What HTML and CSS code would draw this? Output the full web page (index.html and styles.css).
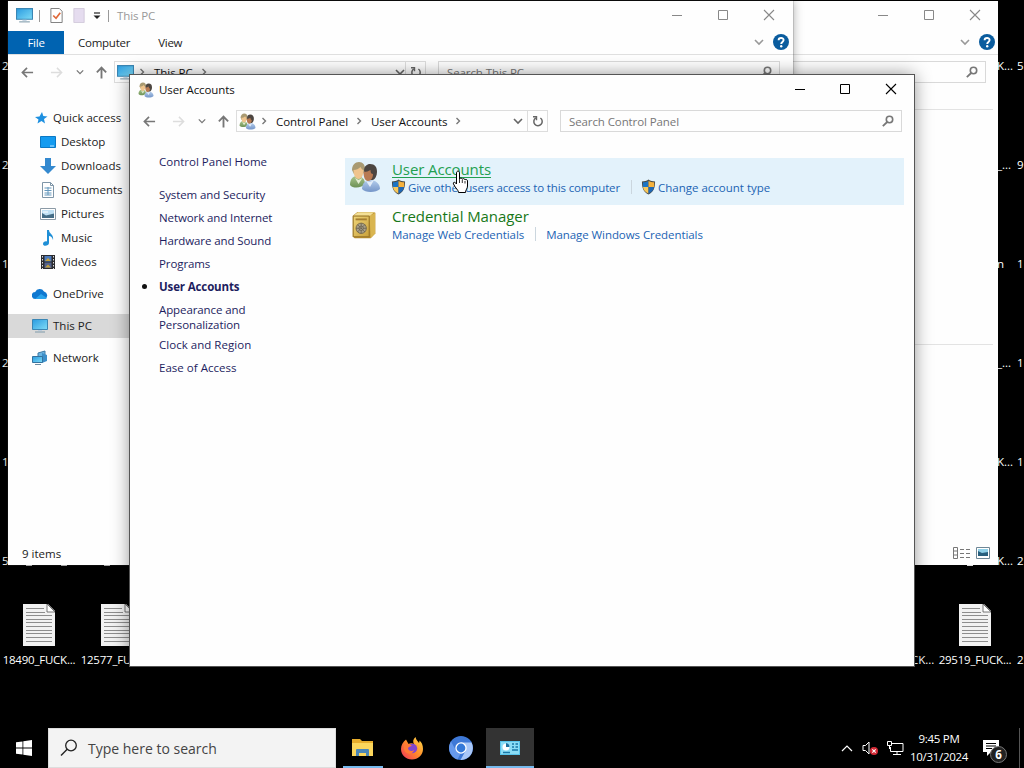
FILE: index.html
```html
<!DOCTYPE html>
<html lang="en">
<head>
    <meta charset="utf-8">
    <title>User Accounts</title>
    <link rel="stylesheet" href="styles.css">
</head>
<body>
<!-- shared icons -->
<svg class="defs" width="0" height="0">
    <defs>
        <linearGradient id="gScreen" x1="0" y1="0" x2="1" y2="1"><stop offset="0" stop-color="#2a9be0"/><stop offset="1" stop-color="#7fdcf7"/></linearGradient>
        <linearGradient id="gSafe" x1="0" y1="0" x2="1" y2="1"><stop offset="0" stop-color="#f0d67a"/><stop offset="1" stop-color="#c9a03a"/></linearGradient>
        <linearGradient id="gFox" x1="1" y1="0" x2="0" y2="1"><stop offset="0" stop-color="#ffe04a"/><stop offset=".5" stop-color="#ff8a2a"/><stop offset="1" stop-color="#f0305e"/></linearGradient>
        <linearGradient id="gGreen" x1="0" y1="0" x2="0" y2="1"><stop offset="0" stop-color="#a9c58c"/><stop offset="1" stop-color="#6d9155"/></linearGradient>
        <linearGradient id="gBlue" x1="0" y1="0" x2="0" y2="1"><stop offset="0" stop-color="#b4cdec"/><stop offset="1" stop-color="#7495c8"/></linearGradient>
    </defs>
    <symbol id="back" viewBox="0 0 14 14"><path d="M13 7H1.5M6.5 2L1.5 7l5 5" fill="none" stroke="currentColor" stroke-width="1.8"/></symbol>
    <symbol id="forward" viewBox="0 0 14 14"><path d="M1 7h11.500M7.500 2l5 5-5 5" fill="none" stroke="currentColor" stroke-width="1.6"/></symbol>
    <symbol id="up" viewBox="0 0 14 14"><path d="M7 13.500V1.800M2 6.800l5-5 5 5" fill="none" stroke="currentColor" stroke-width="2"/></symbol>
    <symbol id="down" viewBox="0 0 10 10"><path d="M1 3l4 4 4-4" fill="none" stroke="currentColor" stroke-width="1.600"/></symbol>
    <symbol id="right" viewBox="0 0 10 10"><path d="M3.500 2l3 3-3 3" fill="none" stroke="currentColor" stroke-width="1.400"/></symbol>
    <symbol id="refresh" viewBox="0 0 12 12"><path d="M8.400 3A4.200 4.200 0 1 1 3.800 2.900" fill="none" stroke="#666" stroke-width="1.500"/><path d="M1 1.700h3.500v3.600" fill="none" stroke="#666" stroke-width="1.400"/></symbol>
    <symbol id="lens" viewBox="0 0 12 12"><circle cx="7.500" cy="4.500" r="3.200" fill="none" stroke="#777" stroke-width="1.600"/><path d="M5.200 7L.8 11.200" stroke="#777" stroke-width="1.800"/></symbol>
    <symbol id="min" viewBox="0 0 12 12"><path d="M1 6.500h10" stroke="currentColor"/></symbol>
    <symbol id="max" viewBox="0 0 12 12"><path d="M1.500 1.500h9v9h-9z" fill="none" stroke="currentColor"/></symbol>
    <symbol id="close" viewBox="0 0 12 12"><path d="M1 1l10 10M11 1L1 11" stroke="currentColor" stroke-width="1.100"/></symbol>
    <symbol id="help" viewBox="0 0 16 16"><circle cx="8" cy="8" r="8" fill="#0a5c9e"/><path d="M5.600 6.300c0-3 5-3 5-.2 0 1.800-2.400 1.800-2.400 3.800" fill="none" stroke="#fff" stroke-width="1.900"/><circle cx="8.200" cy="12.300" r="1.200" fill="#fff"/></symbol>
    <symbol id="pc" viewBox="0 0 16 16"><path d="M.5 1.500h15v10H.5z" fill="url(#gScreen)" stroke="#3a86b4"/><path d="M6 12h4v1H6z" fill="#bcd"/><path d="M3 13.500h10v1H3z" fill="#7e9aaa"/></symbol>
    <symbol id="users" viewBox="0 0 32 32">
        <path d="M1 24c0-6 3-9 7-9 5 0 8 3 8 8-3 4-12 5-15 1z" fill="url(#gGreen)"/>
        <path d="M3 9c0-5 3-8 7-8s6 3 6 7l-2 5H5z" fill="#a99a72"/>
        <path d="M4.500 9c3 0 5-1 7-3 1 2 2 3 3 3 0 5-2 9-5 9s-5-4-5-9z" fill="#efc48d"/>
        <path d="M6 17l3.500 6 4-6-4 2z" fill="#e4edd2"/>
        <path d="M13 28c0-6 4-9 8-9 6 0 10 4 10 9-4 4-15 4-18 0z" fill="url(#gBlue)"/>
        <path d="M15 10c0-5 3-7 6-7 5 0 7 3 7 8 0 4-2 7-4 8h-6z" fill="#4d4641"/>
        <path d="M14.500 11c3 0 5-1 7-2 0 3 1 4 2.500 4 0 4-2 7-5 7s-4.500-4-4.500-9z" fill="#b87a52"/>
        <path d="M17 20l4 6 4-7-4 2z" fill="#e2ecf8"/>
    </symbol>
    <symbol id="shield" viewBox="0 0 16 16"><path d="M8 0c2 1.500 4.500 2 7 2 0 7-1.500 11-7 14C2.500 13 1 9 1 2c2.500 0 5-.5 7-2z" fill="#4b4a45"/><path d="M8 1.500V8H2.100C1.900 6.200 1.900 4.600 2 3c2.300 0 4.200-.6 6-1.500z" fill="#1c74c4"/><path d="M8 1.500V8h5.900c.2-1.800.2-3.400.1-5-2.300 0-4.200-.6-6-1.500z" fill="#f7b23c"/><path d="M8 8H2.100c.4 3 2 5.300 5.900 7z" fill="#f9c85a"/><path d="M8 8h5.900c-.4 3-2 5.300-5.900 7z" fill="#2068b4"/></symbol>
    <symbol id="file" viewBox="0 0 32 42"><path d="M0 0h25l7 7v35H0z" fill="#f2f2f2"/><path d="M24 0v8h8z" fill="#fff" stroke="#555" stroke-width=".8"/><path d="M3 4.500h18M3 8.500h19M3 11.500h26M3 15.500h26M3 18.500h26M3 22.500h26M3 26.500h26M3 29.500h26M3 33.500h26M3 37.500h26" stroke="#8d8d8d"/></symbol>
    <symbol id="picture" viewBox="0 0 16 16"><path d="M.5 2.500h15v11H.5z" fill="#fff" stroke="#8b9aa6"/><path d="M2 4h12v8H2z" fill="#bfe0f4"/><path d="M2 12V7l4 2.500 8-2V12z" fill="#456d86"/><path d="M3 6h5" stroke="#fff"/></symbol>
</svg>

<div class="desktop">
    <!-- file labels peeking out around the windows -->
    <span class="label l1">2</span><span class="label l2">2</span><span class="label l3">1</span>
    <span class="label l4">2</span><span class="label l5">1</span><span class="label l6">5</span>
    <i class="under u1"></i><i class="under u2"></i><i class="under u3"></i><i class="under u4"></i>
    <span class="label r1">K...</span><span class="label n1">5</span>
    <span class="label r2">_...</span><span class="label n2">9</span>
    <span class="label r3">n</span><span class="label n3">1</span>
    <span class="label r4">_...</span><span class="label n4">1</span>
    <span class="label r5">K...</span><span class="label n5">1</span>
    <span class="label r6">K...</span><span class="label n6">2</span>
    <span class="label r7">CK...</span><span class="label n7">2</span>
    <div class="file f1"><svg><use href="#file"/></svg><span>18490_FUCK...</span></div>
    <div class="file f2"><svg><use href="#file"/></svg><span>12577_FUCK...</span></div>
    <div class="file f3"><svg><use href="#file"/></svg><span>29519_FUCK...</span></div>

    <!-- rear explorer window -->
    <div class="window explorer rear">
        <div class="titlebar">
            <div class="controls"><svg><use href="#min"/></svg><svg><use href="#max"/></svg><svg><use href="#close"/></svg></div>
        </div>
        <div class="tabs">
            <svg class="expand"><use href="#down"/></svg>
            <svg class="help"><use href="#help"/></svg>
        </div>
        <div class="navbar">
            <div class="search"><svg><use href="#lens"/></svg></div>
        </div>
        <div class="pane"><hr class="rule"><hr class="rule"></div>
        <div class="status">
            <svg class="view" viewBox="0 0 17 12"><path d="M.5.5h4v11h-4zM.5 4h4M.5 8h4" fill="none" stroke="#777"/><path d="M7 2.500h4M13 2.500h4M7 6.500h4M13 6.500h4M7 10.500h4M13 10.500h4" stroke="#777"/></svg>
            <svg class="view big" viewBox="0 0 14 12"><path d="M.5.500h13v11H.5z" fill="#fff" stroke="#6f8796"/><path d="M2 2h10v7H2z" fill="#8fd0e8"/><path d="M2 9V4l4 2 6-1v4z" fill="#285f7d"/></svg>
        </div>
    </div>

    <!-- This PC window -->
    <div class="window explorer front">
        <div class="titlebar">
            <svg class="app"><use href="#pc"/></svg><i class="bar"></i>
            <svg class="props" viewBox="0 0 13 16"><path d="M.5.500h9l3 3v12H.5z" fill="#fff" stroke="#777"/><path d="M3 8l3 3 4.500-6" fill="none" stroke="#e0693a" stroke-width="1.800"/></svg>
            <svg class="newdir" viewBox="0 0 12 16"><path d="M.5.500h11v15H.5z" fill="#e5dcef" stroke="#d2cadb"/></svg>
            <svg class="custom" viewBox="0 0 8 8"><path d="M1 1h6" stroke="#222" stroke-width="1.200"/><path d="M.5 3.500h7L4 7z" fill="#222"/></svg>
            <i class="bar"></i>
            <span class="caption">This PC</span>
            <div class="controls"><svg><use href="#min"/></svg><svg><use href="#max"/></svg><svg><use href="#close"/></svg></div>
        </div>
        <div class="tabs">
            <span class="tab active">File</span><span class="tab computer">Computer</span><span class="tab">View</span>
            <svg class="expand"><use href="#down"/></svg>
            <svg class="help"><use href="#help"/></svg>
        </div>
        <div class="navbar">
            <div class="arrows">
                <svg><use href="#back"/></svg><svg class="off"><use href="#forward"/></svg><svg class="small"><use href="#down"/></svg><svg><use href="#up"/></svg>
            </div>
            <div class="address">
                <svg class="place"><use href="#pc"/></svg>
                <svg class="chev"><use href="#right"/></svg><span class="crumb">This PC</span><svg class="chev"><use href="#right"/></svg>
                <svg class="drop"><use href="#down"/></svg>
                <div class="reload"><svg><use href="#refresh"/></svg></div>
            </div>
            <div class="search"><span>Search This PC</span><svg><use href="#lens"/></svg></div>
        </div>
        <div class="tree">
            <div class="node"><svg viewBox="0 0 16 16"><path d="M9 2l1.300 4 4.200.5-3.500 2.500 1 4.500L8.500 11l-4 2.500 1-4L2 7l4.500-.5z" fill="#1e90e0"/></svg><span>Quick access</span></div>
            <div class="node sub"><svg viewBox="0 0 16 16"><path d="M.5 2.500h15v11H.5z" fill="#149bf0" stroke="#0b78c4"/><path d="M10 12h4" stroke="#bfe6ff"/></svg><span>Desktop</span></div>
            <div class="node sub"><svg viewBox="0 0 16 16"><path d="M5 0h6v8h5l-8 8-8-8h5z" fill="#3489cf"/></svg><span>Downloads</span></div>
            <div class="node sub"><svg viewBox="0 0 16 16"><path d="M2.500.5h8l3 3v12h-11z" fill="#fff" stroke="#7f96a8"/><path d="M10.500.5v3h3" fill="none" stroke="#7f96a8"/><path d="M4.500 6h7M4.500 8.500h7M4.500 11h7M4.500 13h7M8 5v8" stroke="#6598bd"/></svg><span>Documents</span></div>
            <div class="node sub"><svg><use href="#picture"/></svg><span>Pictures</span></div>
            <div class="node sub"><svg viewBox="0 0 16 16"><path d="M7 0h2c0 4 5 4 4 10-1-3-2-4-4-4v7c0 3-6 4-6 1 0-2 2-3 4-2.500z" fill="#1f8fd6"/></svg><span>Music</span></div>
            <div class="node sub"><svg viewBox="0 0 16 16"><path d="M1 1h14v14H1z" fill="#2b2b2e"/><path d="M4.500 2h7v5.500h-7z" fill="#4d7bbd"/><path d="M4.500 8.500h7V14h-7z" fill="#55648e"/><path d="M5 7l3-3 3 3M5 13.500l3-3 3 3" fill="#c5a23e"/><path d="M2.500 2v13M13.500 2v13" stroke="#ddd" stroke-dasharray="1.500 1.500"/></svg><span>Videos</span></div>
            <div class="node top"><svg viewBox="0 0 16 16"><path d="M3.500 13a3.500 3.500 0 0 1-.3-7A5 5 0 0 1 12 5.500a4 4 0 0 1 1 7.500z" fill="#0f78d0"/><path d="M3 13l6-5 6 4q-1 1-2 1z" fill="#2aa4ec"/></svg><span>OneDrive</span></div>
            <div class="node top selected"><svg><use href="#pc"/></svg><span>This PC</span></div>
            <div class="node top"><svg viewBox="0 0 16 16"><path d="M6 3l7-2v9l-7 1z" fill="#69b4e2" stroke="#3f7aa6"/><path d="M10 3l5 2v6l-5 2z" fill="#3d8fc9"/><path d="M.5 6.500h10v6H.5z" fill="url(#gScreen)" stroke="#34739f"/><path d="M3 14.500h6" stroke="#6c8ba0"/></svg><span>Network</span></div>
        </div>
        <div class="status"><span>9 items</span></div>
    </div>

    <!-- Control Panel window -->
    <div class="window cpanel">
        <div class="titlebar">
            <svg class="app"><use href="#users"/></svg>
            <span class="caption">User Accounts</span>
            <div class="controls"><svg><use href="#min"/></svg><svg><use href="#max"/></svg><svg><use href="#close"/></svg></div>
        </div>
        <div class="navbar">
            <div class="arrows">
                <svg><use href="#back"/></svg><svg class="off"><use href="#forward"/></svg><svg class="small"><use href="#down"/></svg><svg><use href="#up"/></svg>
            </div>
            <div class="address">
                <svg class="place"><use href="#users"/></svg>
                <svg class="chev"><use href="#right"/></svg><span class="crumb">Control Panel</span><svg class="chev"><use href="#right"/></svg><span class="crumb">User Accounts</span><svg class="chev"><use href="#right"/></svg>
                <svg class="drop"><use href="#down"/></svg>
                <div class="reload"><svg><use href="#refresh"/></svg></div>
            </div>
            <div class="search"><span>Search Control Panel</span><svg><use href="#lens"/></svg></div>
        </div>
        <div class="body">
            <ul class="menu">
                <li class="home">Control Panel Home</li>
                <li>System and Security</li>
                <li>Network and Internet</li>
                <li>Hardware and Sound</li>
                <li>Programs</li>
                <li class="here">User Accounts</li>
                <li class="two">Appearance and<br>Personalization</li>
                <li class="wide">Clock and Region</li>
                <li class="wide">Ease of Access</li>
            </ul>
            <div class="content">
                <div class="category hover">
                    <svg class="cat"><use href="#users"/></svg>
                    <div>
                        <div class="heading">User Accounts</div>
                        <div class="links"><svg><use href="#shield"/></svg><span class="give">Give other users access to this computer</span><i></i><svg><use href="#shield"/></svg><span>Change account type</span></div>
                    </div>
                </div>
                <div class="category">
                    <svg class="cat" viewBox="0 0 32 32"><path d="M4 6l5-4h17l2 1v22l-5 5H6l-2-2z" fill="#b58a2c"/><path d="M22 6l6-3v22l-5 5z" fill="#d9b550"/><path d="M4.500 6l5-3.500H27L22.500 6z" fill="#f3df95"/><path d="M4.500 6.500h17v22h-17z" fill="url(#gSafe)" stroke="#98752a"/><path d="M7 10h12" stroke="#a57e30" stroke-width="2"/><circle cx="13" cy="19.500" r="5.500" fill="#a9a08a" stroke="#75684a"/><circle cx="13" cy="19.500" r="2.300" fill="#ece6d2" stroke="#6e654f"/><path d="M13 14v11M7.500 19.500h11M9 15.500l8 8M17 15.500l-8 8" stroke="#655d4c" stroke-width=".8"/></svg>
                    <div>
                        <div class="heading">Credential Manager</div>
                        <div class="links"><span class="web">Manage Web Credentials</span><i></i><span class="web">Manage Windows Credentials</span></div>
                    </div>
                </div>
            </div>
        </div>
    </div>

    <svg class="cursor" viewBox="0 0 17 24"><path d="M4.500 14V3c0-2.500 3-2.500 3 0v6c.5-1.500 2.700-1.200 2.800.3.600-1.200 2.500-.8 2.700.6.800-1 2.500-.3 2.500 1.100V16c0 3-2 3.500-2 6.500h-7c0-2.500-3-4-5-8.500-.8-2 1.500-2.500 3 0z" fill="#fff" stroke="#000"/><path d="M7.500 9v4M10.300 10v3M13 11v2.500" stroke="#000" stroke-width=".8"/></svg>

    <div class="taskbar">
        <div class="start"><svg viewBox="0 0 16 16"><path d="M0 2.300L6.500 1.400V7.600H0zM7.300 1.300L16 0v7.600H7.300zM0 8.400h6.500v6.200L0 13.700zM7.300 8.400H16V16l-8.700-1.300z" fill="#fff"/></svg></div>
        <div class="taskfind"><svg viewBox="0 0 18 18"><circle cx="11" cy="6.500" r="5.300" fill="none" stroke="#222" stroke-width="1.300"/><path d="M7.200 10.300L1 16.500" stroke="#222" stroke-width="1.400"/></svg><span>Type here to search</span></div>
        <div class="apps">
            <div class="task open"><svg viewBox="0 0 24 24"><path d="M1 3h8l2 2h11v15H1z" fill="#e7ad2c"/><path d="M1 7h21v13H1z" fill="#fbd65c"/><path d="M5 14q0-1 1-1h11q1 0 1 1v6h-3v-3H8v3H5z" fill="#4a86b8"/></svg></div>
            <div class="task"><svg viewBox="0 0 24 24"><path d="M15.500 1c-2.500 2.500-3 4.500-1.500 7-2-1-4-1-5.500 0L6 3.500C3 6 1 9 1 13c0 6 5 10.500 11 10.500S23 19 23 13c0-4-1.500-7-3.500-8.500 0 1-.2 2-.5 2.500-1-2-3-3-3.500-6z" fill="url(#gFox)"/><circle cx="12.500" cy="12.500" r="4.700" fill="#8146cf"/><path d="M4 8c3-1 6 0 8 2-2 0-3 1-4 2 0 3 4 4 6 2-1 5-9 5-10-1z" fill="#ff7a36"/></svg></div>
            <div class="task"><svg viewBox="0 0 24 24"><circle cx="12" cy="12" r="12" fill="#3e78d6"/><path d="M12 6.500h10.500A12 12 0 0 1 11.500 24l5-9z" fill="#a9c7f7"/><path d="M2 5.500l5 9 4.500 3-3 6A12 12 0 0 1 2 5.500z" fill="#6699ec"/><circle cx="12" cy="12" r="5.700" fill="#fff"/><circle cx="12" cy="12" r="4.400" fill="#3579d8"/></svg></div>
            <div class="task active"><svg viewBox="0 0 24 24"><path d="M2 5h20v14H2z" fill="#58c4ec"/><path d="M3 6h18v12H3z" fill="#8adcf6"/><circle cx="8" cy="11" r="3.500" fill="#fff"/><path d="M8 11V7a4 4 0 0 1 3.500 4z" fill="#1c6f9f"/><path d="M14 8h2M17.500 8H20M14 11h2M17.500 11H20M14 14h6M5 16.500h7" stroke="#1877a8" stroke-width="1.300"/></svg></div>
        </div>
        <div class="tray">
            <svg class="more" viewBox="0 0 12 8"><path d="M1 7l5-5 5 5" fill="none" stroke="#fff" stroke-width="1.200"/></svg>
            <svg class="vol" viewBox="0 0 17 14"><path d="M1 4.500h2.500L7 1v12L3.500 9.500H1z" fill="none" stroke="#fff"/><circle cx="12" cy="10" r="4" fill="#d32a36"/><path d="M10.300 8.300l3.400 3.400M13.700 8.300l-3.400 3.400" stroke="#fff" stroke-width="1.100"/></svg>
            <svg class="net" viewBox="0 0 17 14"><path d="M5 2.500h11v8H3.500V6M10 10.500v3M6 13.500h8" fill="none" stroke="#fff"/><path d="M.5.500h4v4h-4zM2.500 4.500V8" fill="#000" stroke="#fff"/></svg>
            <div class="clock"><span>9:45 PM</span><span>10/31/2024</span></div>
            <div class="notify"><svg viewBox="0 0 16 16"><path d="M0 0h16v12H8l-4 4v-4H0z" fill="#fff"/><path d="M3 3.500h10M3 6h10M3 8.500h6" stroke="#000" stroke-width="1.200"/></svg><b>6</b></div>
            <div class="peek"></div>
        </div>
    </div>
</div>
</body>
</html>
```
FILE: styles.css
```css
body {
    margin: 0;
    background: #000;
    font-family: "Open Sans", "Noto Sans", sans-serif;
    font-size: 11.5px;
    line-height: 15px;
    color: #222;
}
* {
    box-sizing: border-box;
}
svg {
    display: block;
    flex: none;
}
span {
    white-space: nowrap;
}
.defs {
    position: absolute;
}
.desktop {
    position: relative;
    width: 1024px;
    height: 768px;
    overflow: hidden;
    background: #000;
}

/* desktop files */
.label {
    position: absolute;
    color: #fff;
}
.l1, .l2, .l3, .l4, .l5, .l6 { left: 2px; }
.l1, .r1, .n1 { top: 58px; }
.l2, .r2, .n2 { top: 157px; }
.l3, .r3, .n3 { top: 256px; }
.l4, .r4, .n4 { top: 355px; }
.l5, .r5, .n5 { top: 454px; }
.l6, .r6, .n6 { top: 553px; }
.r7, .n7 { top: 652px; }
.under {
    position: absolute;
    top: 565px;
    width: 6px;
    height: 1px;
    background: #ddd;
}
.u1 { left: 26px; }
.u2 { left: 61px; }
.u3 { left: 104px; }
.u4 { left: 967px; }
.r1, .r2, .r3, .r4, .r5, .r6 { left: 997px; }
.r7 { left: 911px; }
.n1, .n2, .n3, .n4, .n5, .n6, .n7 { left: 1017px; }
.file {
    position: absolute;
    top: 604px;
    width: 76px;
    display: flex;
    flex-direction: column;
    align-items: center;
    gap: 6px;
    color: #fff;
    letter-spacing: -.22px;
}
.file svg {
    width: 32px;
    height: 42px;
}
.f1 { left: 1px; }
.f2 { left: 79px; }
.f3 { left: 937px; }

/* windows */
.window {
    position: absolute;
    display: flex;
    flex-direction: column;
    background: #fefefe;
}
.titlebar, .tabs, .navbar, .status {
    flex: none;
}
.explorer {
    top: 1px;
    width: 785px;
    height: 564px;
}
.rear {
    left: 213px;
}
.front {
    left: 8px;
    box-shadow: 0 0 10px rgba(0, 0, 0, .35), 0 0 1px #555;
}
.cpanel {
    left: 130px;
    top: 75px;
    width: 784px;
    height: 591px;
    box-shadow: 0 0 0 1px #555, 0 0 17px rgba(0, 0, 0, .45);
}
.titlebar {
    display: flex;
    align-items: center;
    height: 29px;
    padding-left: 8px;
}
.titlebar .app {
    width: 16px;
    height: 16px;
}
.caption {
    margin-left: 5px;
    color: #111;
    letter-spacing: -.1px;
}
.explorer .app {
    width: 17px;
    height: 17px;
}
.explorer .caption {
    color: #999;
    margin-left: 8px;
}
.bar {
    width: 1px;
    height: 12px;
    margin-left: 6px;
    background: #999;
}
.props {
    width: 13px;
    height: 15px;
    margin-left: 10px;
}
.newdir {
    width: 12px;
    height: 15px;
    margin-left: 10px;
}
.custom {
    width: 8px;
    height: 8px;
    margin-left: 8px;
    margin-right: 1px;
}
.controls {
    display: flex;
    gap: 33px;
    margin-left: auto;
    margin-right: 17px;
    padding-bottom: 1px;
    color: #000;
}
.controls svg {
    width: 12px;
    height: 12px;
}
.cpanel .controls svg:first-child,
.cpanel .controls svg:nth-child(2) {
    margin-left: -1px;
    margin-right: 1px;
}
.explorer .controls {
    gap: 34px;
    color: #888;
    margin-right: 18px;
}
.rear .controls {
    margin-right: 17px;
}
.tabs {
    display: flex;
    align-items: center;
    height: 25px;
    border-bottom: 1px solid #e0e0e0;
}
.tab {
    padding-left: 25px;
    letter-spacing: -.25px;
}
.tab.computer {
    padding-left: 14px;
    padding-right: 3px;
}
.tab.active {
    width: 56px;
    height: 23px;
    padding: 4px 0 0;
    background: #0063b1;
    color: #fff;
    text-align: center;
}
.expand {
    width: 10px;
    height: 10px;
    margin-left: auto;
    margin-right: 9px;
    color: #999;
}
.help {
    width: 16px;
    height: 16px;
    margin-right: 4px;
}
.rear .help {
    margin-right: 3px;
}
.navbar {
    display: flex;
    align-items: center;
    height: 34px;
    padding: 0 12px 0 13px;
}
.explorer .navbar {
    padding-right: 13px;
}
.rear .navbar {
    padding-right: 12px;
}
.arrows {
    display: flex;
    align-items: center;
    width: 93px;
    color: #777;
}
.arrows svg {
    width: 13px;
    height: 13px;
    margin-right: 16px;
}
.arrows .off {
    color: #ddd;
    margin-right: 13px;
}
.arrows .small {
    width: 8px;
    height: 8px;
    margin-right: 11px;
}
.arrows svg:last-child {
    margin-right: 0;
}
.address {
    display: flex;
    align-items: center;
    width: 312px;
    height: 22px;
    padding-left: 2px;
    border: 1px solid #ddd;
    color: #111;
}
.place {
    width: 17px;
    height: 17px;
}
.explorer .drop {
    margin-right: -4px;
}
.chev {
    width: 10px;
    height: 10px;
    margin-left: 3px;
    color: #777;
}
.crumb {
    margin: 0 3px 0 7px;
    letter-spacing: -.04px;
}
.drop {
    width: 10px;
    height: 10px;
    margin-left: auto;
    color: #666;
}
.reload {
    display: flex;
    align-items: center;
    height: 20px;
    margin-left: 4px;
    padding: 0 3px 0 4px;
    border-left: 1px solid #ddd;
}
.reload svg {
    width: 12px;
    height: 12px;
}
.search {
    display: flex;
    align-items: center;
    width: 342px;
    height: 22px;
    margin-left: auto;
    padding: 0 7px 0 8px;
    border: 1px solid #d9d9d9;
    color: #777;
    letter-spacing: -.1px;
}
.search svg {
    width: 12px;
    height: 12px;
    margin-left: auto;
}
.pane {
    padding: 20px 5px 0 0;
}
.rule {
    height: 1px;
    margin: 0;
    border: 0;
    background: #e3e3e3;
}
.rule + .rule {
    margin-top: 234px;
}
.tree {
    padding-top: 17px;
    width: 160px;
}
.node {
    display: flex;
    align-items: center;
    gap: 5px;
    height: 24px;
    padding: 0 0 1px 24px;
}
.node svg {
    width: 16px;
    height: 16px;
}
.node.sub {
    padding-left: 32px;
}
.node.top {
    margin-top: 8px;
}
.node:first-child {
    padding-left: 25px;
    gap: 4px;
}
.selected {
    background: #d9d9d9;
}
.status {
    display: flex;
    align-items: center;
    height: 23px;
    margin-top: auto;
    padding: 0 8px 0 14px;
}
.rear .status {
    height: 25px;
}
.view {
    width: 17px;
    height: 12px;
    margin-left: auto;
}
.view.big {
    width: 14px;
    margin-left: 6px;
}

/* control panel */
.body {
    display: flex;
}
.menu {
    list-style: none;
    width: 215px;
    margin: 0;
    padding: 16px 0 0 29px;
    color: #1d1d5e;
    letter-spacing: -.1px;
}
.menu li {
    margin-bottom: 8px;
}
.menu .home {
    margin-bottom: 18px;
    letter-spacing: 0;
}
.menu .two {
    margin-bottom: 5px;
}
.menu .wide {
    letter-spacing: .03px;
}
.menu .here {
    display: flex;
    align-items: center;
    margin-left: -17px;
    font-weight: bold;
    letter-spacing: -.13px;
}
.here::before {
    content: "";
    width: 5px;
    height: 5px;
    margin-right: 12px;
    border-radius: 50%;
    background: #111;
}
.content {
    width: 559px;
    padding-top: 20px;
}
.category {
    display: flex;
    gap: 11px;
    height: 47px;
    padding: 3px 0 0 4px;
}
.category.hover {
    background: #e3f2fb;
}
.cat {
    width: 32px;
    height: 32px;
}
.category:last-child .cat {
    width: 30px;
    height: 30px;
    margin: 2px 2px 0 0;
}
.heading {
    height: 17px;
    font-size: 15px;
    line-height: 17px;
    letter-spacing: -.07px;
    color: #187818;
}
.hover .heading {
    color: #22a050;
    letter-spacing: -.1px;
    text-decoration: underline;
    text-underline-offset: 2px;
}
.links {
    display: flex;
    align-items: center;
    height: 18px;
    color: #1c64b4;
}
.links svg {
    width: 15px;
    height: 16px;
    margin: 0 2px 0 -1px;
}
.give {
    letter-spacing: -.14px;
}
.web {
    letter-spacing: -.07px;
}
.links i {
    width: 1px;
    height: 14px;
    margin: 0 10px 0 11px;
    background: #cbd6de;
}
.cursor {
    position: absolute;
    left: 452px;
    top: 170px;
    width: 17px;
    height: 24px;
}

/* taskbar */
.taskbar {
    position: absolute;
    left: 0;
    bottom: 0;
    display: flex;
    width: 1024px;
    height: 40px;
    background: #000;
    color: #fff;
}
.start {
    display: flex;
    align-items: center;
    justify-content: center;
    width: 48px;
}
.start svg {
    width: 16px;
    height: 16px;
}
.taskfind {
    display: flex;
    align-items: center;
    width: 288px;
    padding-left: 11px;
    border: 1px solid #ddd;
    background: #f3f3f3;
    color: #444;
    font-size: 14px;
    line-height: 20px;
}
.taskfind span {
    padding-top: 1px;
}
.taskfind svg {
    width: 18px;
    height: 18px;
    margin-right: 10px;
}
.apps {
    display: flex;
    gap: 1px;
    margin-left: 3px;
}
.task {
    display: flex;
    align-items: center;
    justify-content: center;
    width: 48px;
}
.task svg {
    width: 24px;
    height: 24px;
}
.task.open {
    background: linear-gradient(#76b9ed, #76b9ed) center bottom / 40px 2px no-repeat;
}
.task.active {
    background: #333;
    box-shadow: inset 0 -2px #76b9ed;
}
.tray {
    display: flex;
    align-items: center;
    margin-left: auto;
}
.more {
    width: 12px;
    height: 8px;
    margin-right: 9px;
}
.vol {
    width: 17px;
    height: 14px;
    margin-right: 8px;
}
.net {
    width: 17px;
    height: 14px;
}
.clock {
    display: flex;
    flex-direction: column;
    align-items: center;
    gap: 3px;
    width: 70px;
    margin: 0 9px 1px 0;
    letter-spacing: -.3px;
}
.notify {
    position: relative;
    width: 36px;
    height: 16px;
}
.notify svg {
    width: 16px;
    height: 16px;
}
.notify b {
    position: absolute;
    left: 7px;
    top: 6px;
    width: 17px;
    height: 17px;
    border: 1px solid #777;
    border-radius: 50%;
    background: #222;
    text-align: center;
}
.peek {
    width: 5px;
    height: 40px;
    border-left: 1px solid #555;
}
```
